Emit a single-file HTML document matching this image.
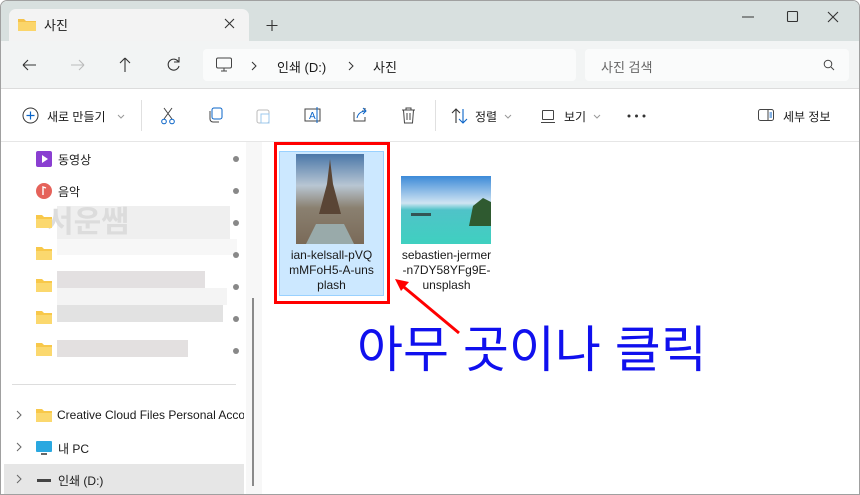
<!DOCTYPE html>
<html><head><meta charset="utf-8"><style>
*{margin:0;padding:0;box-sizing:border-box}
body{width:860px;height:495px;overflow:hidden;background:#fff;font-family:"Liberation Sans","Noto Sans CJK KR",sans-serif;position:relative;font-size:12px;color:#1a1a1a}
.a{position:absolute}
.t{position:absolute;white-space:nowrap}
</style></head><body>
<div class="a" style="left:0;top:0;width:860px;height:495px;border:1px solid #a0a0a0;border-radius:7px 7px 0 0;overflow:hidden">
<div class="a" style="left:0;top:0;width:860px;height:40px;background:#d8e0df"></div>
<div class="a" style="left:8px;top:8px;width:240px;height:33px;background:#f3f3f3;border-radius:7px 7px 0 0"></div>
<svg class="a" style="left:17px;top:16px" width="18" height="14"><path d="M0 2h6l2 2h10v10H0z" fill="#f5c24a"/><rect x="0" y="5" width="18" height="9" fill="#fbd56a"/></svg>
<div class="t" style="left:43px;top:14px;font-size:13px">사진</div>
<svg class="a" style="left:0;top:0" width="860" height="140" fill="none" stroke="#333" stroke-width="1.1">
<path d="M224 18l9 9M233 18l-9 9"/>
<path d="M271 19v11M265.5 24.5h11"/>
<path d="M741 16h12"/>
<rect x="786.5" y="10.5" width="10" height="10" rx="1"/>
<path d="M827 11l10 10M837 11l-10 10"/>
<path d="M22 64h13M22 64l5-5M22 64l5 5"/>
<path stroke="#bbb" d="M70 64h13M83 64l-5-5M83 64l-5 5"/>
<path d="M124 57v14M124 57l-5 5M124 57l5 5"/>
<path d="M177 60a5.5 5.5 0 1 0 1 4M177 56v4h-4"/>
</svg>
<div class="a" style="left:0;top:40px;width:860px;height:48px;background:#f2f4f4;border-bottom:1px solid #dcdcdc"></div>
<svg class="a" style="left:0;top:40px" width="200" height="48" fill="none" stroke="#333" stroke-width="1.1">
<path d="M22 24h13M22 24l5-5M22 24l5 5"/>
<path stroke="#bbb" d="M70 24h13M83 24l-5-5M83 24l-5 5"/>
<path d="M124 17v14M124 17l-5 5M124 17l5 5"/>
<path d="M177.5 21a5.5 5.5 0 1 0 .5 4M178 16v5h-5"/>
</svg>
<div class="a" style="left:202px;top:48px;width:373px;height:32px;background:#fafbfb;border-radius:4px"></div>
<svg class="a" style="left:214px;top:56px" width="18" height="16"><rect x="1.5" y="1" width="15" height="10" rx="1.5" fill="none" stroke="#444"/><path d="M6 14h6M9 11v3" stroke="#444"/></svg>
<svg class="a" style="left:250px;top:60px" width="110" height="10" fill="none" stroke="#333"><path d="M1 1l4 4-4 4M98 1l4 4-4 4"/></svg>
<div class="t" style="left:276px;top:56px;font-size:13px">인쇄 (D:)</div>
<div class="t" style="left:372px;top:56px;font-size:13px">사진</div>
<div class="a" style="left:584px;top:48px;width:264px;height:32px;background:#fafbfb;border-radius:4px"></div>
<div class="t" style="left:600px;top:56px;font-size:13px;color:#666">사진 검색</div>
<svg class="a" style="left:822px;top:58px" width="12" height="12"><circle cx="5" cy="5" r="3.8" fill="none" stroke="#444"/><path d="M8 8l3 3" stroke="#444"/></svg>
<svg class="a" style="left:21px;top:106px" width="17" height="17"><circle cx="8.5" cy="8.5" r="7.5" fill="none" stroke="#333"/><path d="M8.5 4.5v8M4.5 8.5h8" stroke="#0a64c8" stroke-width="1.2"/></svg>
<div class="t" style="left:46px;top:107px;font-size:12px">새로 만들기</div>
<svg class="a" style="left:116px;top:113px" width="8" height="5"><path d="M1 1l3 3 3-3" fill="none" stroke="#999"/></svg>
<div class="a" style="left:140px;top:99px;width:1px;height:31px;background:#e0e0e0"></div>
<svg class="a" style="left:159px;top:106px" width="16" height="18"><path d="M4 1l8 11M12 1L4 12" stroke="#444"/><circle cx="4" cy="14.5" r="2.3" fill="none" stroke="#0a64c8"/><circle cx="12" cy="14.5" r="2.3" fill="none" stroke="#0a64c8"/></svg>
<svg class="a" style="left:206px;top:106px" width="17" height="16"><rect x="5" y="1" width="10" height="11" rx="2" fill="none" stroke="#0a64c8"/><path d="M3 4v8a3 3 0 003 3h6" fill="none" stroke="#444"/></svg>
<svg class="a" style="left:255px;top:106px" width="15" height="17"><rect x="1" y="3" width="12" height="13" rx="2" fill="none" stroke="#bbb"/><rect x="5" y="7" width="8" height="9" fill="none" stroke="#9cc8ee"/></svg>
<svg class="a" style="left:303px;top:106px" width="18" height="17"><rect x="1" y="2" width="15" height="12" fill="none" stroke="#444"/><text x="5" y="12" font-size="10" fill="#0a64c8" font-family="Liberation Sans">A</text><path d="M13 0v16" stroke="#0a64c8"/></svg>
<svg class="a" style="left:352px;top:106px" width="16" height="16"><path d="M12 1v3H9M1 5v9h11v-4" fill="none" stroke="#444"/><path d="M4 11c1-5 5-7 9-7M10 1l3 3-3 3" fill="none" stroke="#0a64c8"/></svg>
<svg class="a" style="left:400px;top:106px" width="15" height="17"><path d="M1 3h13M5 3V1h5v2M2.5 3l1 13h8l1-13M6 6v7M9 6v7" fill="none" stroke="#444"/></svg>
<div class="a" style="left:434px;top:99px;width:1px;height:31px;background:#e0e0e0"></div>
<svg class="a" style="left:450px;top:107px" width="18" height="16" fill="none" stroke-width="1.1"><path stroke="#333" d="M5 15V1M1 5l4-4 4 4"/><path stroke="#0a64c8" d="M12 1v14M8 11l4 4 4-4"/></svg>
<div class="t" style="left:474px;top:107px;font-size:12px">정렬</div>
<svg class="a" style="left:503px;top:113px" width="8" height="5"><path d="M1 1l3 3 3-3" fill="none" stroke="#999"/></svg>
<div class="a" style="left:541px;top:109px;width:12px;height:10px;border:1px solid #444;border-radius:1px"></div>
<div class="a" style="left:540px;top:121px;width:14px;height:1px;background:#444"></div>
<div class="t" style="left:563px;top:107px;font-size:12px">보기</div>
<svg class="a" style="left:592px;top:113px" width="8" height="5"><path d="M1 1l3 3 3-3" fill="none" stroke="#999"/></svg>
<svg class="a" style="left:626px;top:113px" width="20" height="4" fill="#333"><circle cx="2" cy="2" r="1.5"/><circle cx="9.5" cy="2" r="1.5"/><circle cx="17" cy="2" r="1.5"/></svg>
<svg class="a" style="left:757px;top:108px" width="17" height="13"><rect x="0.5" y="0.5" width="15" height="11" rx="2" fill="none" stroke="#444"/><path d="M10 0.5v11" stroke="#444"/><path d="M11.5 4h2.5M11.5 6h2.5M11.5 8h2.5" stroke="#0a64c8"/></svg>
<div class="t" style="left:782px;top:107px;font-size:12px">세부 정보</div>
<div class="a" style="left:0;top:140px;width:860px;height:1px;background:#e6e6e6"></div>
<div class="a" style="left:245px;top:141px;width:16px;height:354px;background:#f7f7f7"></div>
<div class="a" style="left:251px;top:297px;width:2px;height:188px;background:#8a8a8a"></div>
<svg class="a" style="left:35px;top:150px" width="16" height="16"><rect width="16" height="16" rx="2" fill="#8a3fd1"/><path d="M6 4l6 4-6 4z" fill="#fff"/></svg>
<div class="t" style="left:57px;top:150px;font-size:12px">동영상</div>
<svg class="a" style="left:35px;top:182px" width="16" height="16"><circle cx="8" cy="8" r="8" fill="#e5625a"/><path d="M7 12V4l3 1" stroke="#fff" fill="none" stroke-width="1.4"/></svg>
<div class="t" style="left:57px;top:182px;font-size:12px">음악</div>
<div class="a" style="left:56px;top:205px;width:173px;height:33px;background:#efefef"></div>
<div class="a" style="left:56px;top:238px;width:180px;height:16px;background:#f7f7f7"></div>
<div class="a" style="left:56px;top:270px;width:148px;height:17px;background:#e3e0e1"></div>
<div class="a" style="left:56px;top:287px;width:170px;height:17px;background:#f4f4f4"></div>
<div class="a" style="left:56px;top:304px;width:166px;height:17px;background:#e2e2e2"></div>
<div class="a" style="left:56px;top:339px;width:131px;height:17px;background:#e3e0e0"></div>
<div class="t" style="left:45px;top:196px;font-size:30px;color:#dcdcdc;font-weight:bold">서운쌤</div>
<svg class="a" style="left:0;top:0" width="260" height="495">
<g fill="#f8c84a"><path d="M35 214h6l2 2h8v11H35z"/><path d="M35 246h6l2 2h8v11H35z"/><path d="M35 278h6l2 2h8v11H35z"/><path d="M35 310h6l2 2h8v11H35z"/><path d="M35 342h6l2 2h8v11H35z"/><path d="M35 408h6l2 2h8v11H35z"/></g>
<g fill="#fbd86e"><rect x="35" y="218" width="16" height="9"/><rect x="35" y="250" width="16" height="9"/><rect x="35" y="282" width="16" height="9"/><rect x="35" y="314" width="16" height="9"/><rect x="35" y="346" width="16" height="9"/><rect x="35" y="412" width="16" height="9"/></g>
<g fill="#888"><circle cx="235" cy="158" r="3"/><circle cx="235" cy="190" r="3"/><circle cx="235" cy="222" r="3"/><circle cx="235" cy="254" r="3"/><circle cx="235" cy="286" r="3"/><circle cx="235" cy="318" r="3"/><circle cx="235" cy="350" r="3"/></g>
<rect x="11" y="383" width="224" height="1" fill="#ddd"/>
<rect x="3" y="463" width="240" height="32" fill="#e6e6e6"/>
<g stroke="#666" fill="none"><path d="M16 410l4 4-4 4M16 442l4 4-4 4M16 474l4 4-4 4"/></g>
<rect x="35" y="440" width="16" height="11" rx="1" fill="#2aa8e0"/><rect x="40" y="452" width="6" height="2" fill="#666"/>
<rect x="36" y="478" width="14" height="3" fill="#444"/>
</svg>
<div class="t" style="left:56px;top:407px;font-size:12px;width:187px;overflow:hidden">Creative Cloud Files Personal Acco</div>
<div class="t" style="left:57px;top:439px;font-size:12px">내 PC</div>
<div class="t" style="left:57px;top:471px;font-size:12px">인쇄 (D:)</div>
<div class="a" style="left:278px;top:150px;width:105px;height:145px;background:#cce8ff;border:1px solid #99d1ff"></div>
<div class="a" style="left:273px;top:141px;width:116px;height:162px;border:3px solid #f00"></div>
<svg class="a" style="left:295px;top:153px" width="68" height="90"><defs><linearGradient id="g1" x1="0" y1="0" x2="0" y2="1"><stop offset="0" stop-color="#4a77a8"/><stop offset=".35" stop-color="#b8c6d3"/><stop offset=".6" stop-color="#8a8070"/><stop offset="1" stop-color="#7a6a58"/></linearGradient></defs><rect width="68" height="90" fill="url(#g1)"/><path d="M34 5l-3 25-8 30h22l-8-30z" fill="#5a4535"/><path d="M20 70h28l10 20H10z" fill="#9aa"/></svg>
<svg class="a" style="left:400px;top:175px" width="90" height="68"><defs><linearGradient id="g2" x1="0" y1="0" x2="0" y2="1"><stop offset="0" stop-color="#3c8ad8"/><stop offset=".4" stop-color="#cfe4f2"/><stop offset=".5" stop-color="#4fc3c8"/><stop offset="1" stop-color="#3fd0c0"/></linearGradient></defs><rect width="90" height="68" fill="url(#g2)"/><path d="M68 50l4-20 10-8 8 4v24z" fill="#2f5a30"/><rect x="10" y="37" width="20" height="3" fill="#355"/></svg>
<div class="t" style="left:270px;top:247px;width:121px;text-align:center;font-size:12px;line-height:15px">ian-kelsall-pVQ<br>mMFoH5-A-uns<br>plash</div>
<div class="t" style="left:385px;top:247px;width:121px;text-align:center;font-size:12px;line-height:15px">sebastien-jermer<br>-n7DY58YFg9E-<br>unsplash</div>
<svg class="a" style="left:380px;top:270px" width="90" height="70"><path d="M78 62L18 12" stroke="#f00" stroke-width="3"/><path d="M14 8l14 3-8 9z" fill="#f00"/></svg>
<div class="t" style="left:356px;top:318px;font-size:50px;color:#1010ee;line-height:62px">아무 곳이나 클릭</div>
</div>
</body></html>
